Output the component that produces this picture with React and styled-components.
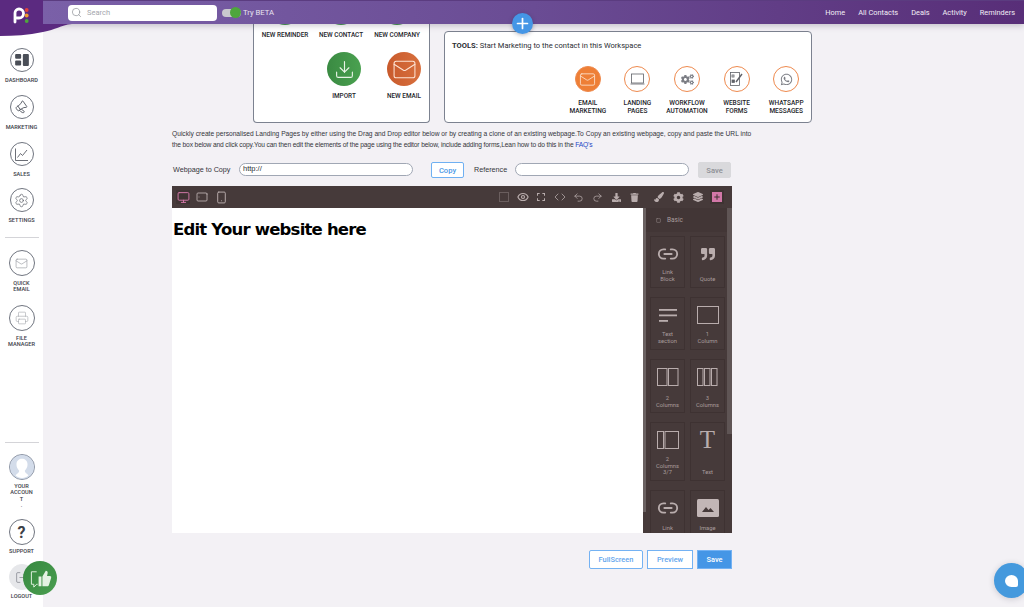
import styled, { createGlobalStyle } from 'styled-components';
import { Mail, Download, Settings, Megaphone, Search, Monitor, Tablet, Smartphone, Eye, Code, Undo2, Redo2, Link2, Plus, Square, Printer, LogOut } from 'lucide-react';
import { FaWhatsapp, FaCog, FaCogs, FaLayerGroup, FaPaintBrush, FaTrash, FaDownload, FaQuoteRight } from 'react-icons/fa';

const GlobalStyle = createGlobalStyle`
  html, body {
    margin: 0;
    height: 100%;
    overflow: hidden;
    background: #f3f1f5;
    font-family: Roboto, "Liberation Sans", sans-serif;
  }
  * { box-sizing: border-box; }
`;

const Page = styled.div`
  position: relative;
  display: flex;
  width: 1024px;
  height: 607px;
  overflow: hidden;
`;

// Left rail
const Sidebar = styled.aside`
  width: 43px;
  flex: none;
  height: 607px;
  background: #fff;
  display: flex;
  flex-direction: column;
  align-items: center;
  padding-top: 48px;
`;

const Brand = styled.svg`
  position: absolute;
  left: 0;
  top: 0;
  z-index: 5;
`;

const NavItem = styled.div`
  display: flex;
  flex-direction: column;
  align-items: center;
  width: 43px;
  flex: none;
  height: ${(p) => p.$height}px;
`;

const NavCircle = styled.div`
  width: ${(p) => p.$size || 24}px;
  height: ${(p) => p.$size || 24}px;
  border-radius: 50%;
  border: 1px solid ${(p) => p.$line || '#70757f'};
  display: flex;
  align-items: center;
  justify-content: center;
  color: ${(p) => p.$color || '#5b5f68'};
  background: ${(p) => p.$bg || '#fff'};
  flex: none;
  overflow: hidden;
`;

const HelpMark = styled.span`
  font-size: 16px;
  font-weight: 700;
  color: #3c4048;
`;

const NavLabel = styled.div`
  margin-top: ${(p) => p.$gap || 5}px;
  font-size: 5.6px;
  line-height: 6.4px;
  font-weight: 500;
  color: #3c4048;
  text-align: center;
  white-space: nowrap;
`;

const Divider = styled.div`
  width: 34px;
  height: 1px;
  background: #d4d4d8;
  flex: none;
  margin-bottom: ${(p) => p.$below}px;
`;

const Spacer = styled.div`
  flex: 1;
`;

const Main = styled.div`
  flex: 1;
  display: flex;
  flex-direction: column;
  min-width: 0;
`;

// Top bar
const TopBar = styled.header`
  height: 24px;
  flex: none;
  display: flex;
  align-items: center;
  padding-left: 25px;
  background: linear-gradient(90deg, #7a60a8 0%, #6a4c94 50%, #582e78 100%);
  border-top: 1px solid #5b3c80;
  box-shadow: 0 2px 6px rgba(60, 50, 80, 0.25);
  position: relative;
  z-index: 3;
`;

const SearchBox = styled.div`
  width: 149px;
  height: 16px;
  border-radius: 4px;
  background: #fff;
  display: flex;
  align-items: center;
  gap: 5px;
  padding-left: 3px;
  color: #a4a6ad;
  font-size: 7.5px;
`;

const Toggle = styled.div`
  position: relative;
  width: 19px;
  height: 8px;
  border-radius: 4px;
  background: #c9c9ce;
  margin-left: 5px;
`;

const ToggleKnob = styled.div`
  position: absolute;
  right: 0;
  top: -1.5px;
  width: 11px;
  height: 11px;
  border-radius: 50%;
  background: #4ea63c;
`;

const BetaText = styled.span`
  margin-left: 2px;
  color: #e8e3f0;
  font-size: 7.7px;
`;

const TopNav = styled.nav`
  margin-left: auto;
  margin-right: 9px;
  display: flex;
  gap: 13px;
`;

const TopLink = styled.span`
  color: #f2eef6;
  font-size: 7.4px;
`;

const PlusButton = styled.div`
  position: absolute;
  left: 512px;
  top: 13px;
  width: 21px;
  height: 21px;
  border-radius: 50%;
  background: #4596e6;
  color: #fff;
  display: flex;
  align-items: center;
  justify-content: center;
  box-shadow: 0 1px 4px rgba(40, 40, 60, 0.35);
  z-index: 4;
`;

// Quick action cards
const CardsRow = styled.section`
  height: 99px;
  flex: none;
  display: flex;
  gap: 14px;
  padding-left: 210px;
`;

const ActionsCard = styled.div`
  width: 177px;
  height: 99px;
  background: #fff;
  border: 1.5px solid #7c8290;
  border-top: none;
  border-radius: 0 0 4px 4px;
  overflow: hidden;
`;

const ActionRow = styled.div`
  display: flex;
  justify-content: flex-end;
  gap: ${(p) => p.$gap}px;
  padding-right: ${(p) => p.$right}px;
  margin-top: ${(p) => p.$top}px;
`;

const ActionItem = styled.div`
  width: ${(p) => p.$width}px;
  display: flex;
  flex-direction: column;
  align-items: center;
`;

const ActionCircle = styled.div`
  width: 34px;
  height: 34px;
  border-radius: 50%;
  flex: none;
  display: flex;
  align-items: center;
  justify-content: center;
  color: #e9f3e6;
  background: ${(p) => p.$bg};
`;

const ActionLabel = styled.div`
  margin-top: ${(p) => p.$gap}px;
  font-size: 6.4px;
  font-weight: 500;
  line-height: 8px;
  white-space: nowrap;
  color: #23252a;
`;

const ToolsCard = styled.div`
  width: 368px;
  height: 92px;
  margin-top: 7px;
  background: #fff;
  border: 1.5px solid #7c8290;
  border-radius: 4px;
  padding: 9px 0 0 7px;
  display: flex;
  flex-direction: column;
`;

const ToolsTitle = styled.div`
  font-size: 7.55px;
  line-height: 10px;
  color: #2b2d33;
  b { font-weight: 700; }
`;

const ToolsRow = styled.div`
  margin-top: 15px;
  display: flex;
  justify-content: flex-end;
`;

const ToolItem = styled.div`
  width: 49.6px;
  display: flex;
  flex-direction: column;
  align-items: center;
`;

const ToolCircle = styled.div`
  width: 26px;
  height: 26px;
  border-radius: 50%;
  border: 1px solid #ee8a4e;
  background: ${(p) => (p.$filled ? '#ee7f36' : '#fff')};
  color: ${(p) => (p.$filled ? '#fde3cf' : '#7b7d84')};
  display: flex;
  align-items: center;
  justify-content: center;
`;

const ToolLabel = styled.div`
  margin-top: 6.8px;
  font-size: 6.5px;
  font-weight: 500;
  line-height: 8.2px;
  text-align: center;
  white-space: nowrap;
  color: #23252a;
`;

// Landing page builder
const Builder = styled.section`
  padding-left: 129px;
  width: 689px;
`;

const Intro = styled.p`
  margin: 5px 0 0;
  font-family: "Liberation Sans", sans-serif;
  font-size: 6.67px;
  line-height: 11px;
  color: #33353b;
  white-space: nowrap;
  a { color: #2347c5; text-decoration: none; }
`;

const IntroLine = styled.span`
  display: block;
  letter-spacing: ${(p) => p.$spacing || 0}px;
`;

const CopyRow = styled.div`
  margin-top: 12px;
  height: 16px;
  display: flex;
  align-items: center;
  font-family: "Liberation Sans", sans-serif;
  font-size: 7.2px;
  color: #33353b;
`;

const RowLabel = styled.span`
  width: ${(p) => p.$width}px;
  margin-left: ${(p) => p.$left || 0}px;
  margin-bottom: 2px;
  flex: none;
  padding-left: 1px;
  white-space: nowrap;
`;

const UrlInput = styled.div`
  width: 174px;
  height: 13px;
  margin-bottom: 2px;
  border: 1px solid #a0a7b4;
  border-radius: 7px;
  background: #fff;
  font-size: 7.5px;
  line-height: 10px;
  padding-left: 3px;
  color: #2b2d33;
  flex: none;
`;

const SmallButton = styled.div`
  height: 16px;
  width: ${(p) => p.$width}px;
  flex: none;
  margin-left: ${(p) => p.$left}px;
  border-radius: 2px;
  border: 1px solid ${(p) => (p.$muted ? '#d9d9dc' : '#6fb0f2')};
  background: ${(p) => (p.$muted ? '#d9d9dc' : '#fff')};
  color: ${(p) => (p.$muted ? '#8d8f94' : '#4b97e6')};
  font-family: Roboto, sans-serif;
  font-size: 7.6px;
  font-weight: 500;
  display: flex;
  align-items: center;
  justify-content: center;
`;

const Editor = styled.div`
  margin-top: 8px;
  width: 560px;
  height: 347px;
  display: flex;
  flex-direction: column;
  background: #fff;
`;

const EditorBar = styled.div`
  height: 22px;
  flex: none;
  background: #463a3a;
  display: flex;
  align-items: center;
  color: #b9adad;
`;

const BarGroup = styled.div`
  display: flex;
  align-items: center;
  flex: none;
  gap: ${(p) => p.$gap}px;
  margin-left: ${(p) => p.$left || 0}px;
`;

const BarIcon = styled.span`
  width: 14px;
  height: 14px;
  display: flex;
  align-items: center;
  justify-content: center;
  flex: none;
  background: ${(p) => (p.$active ? '#3f3333' : 'transparent')};
  color: ${(p) => (p.$active ? '#d278a8' : 'inherit')};
`;

const SideTablet = styled(Tablet)`
  transform: rotate(90deg);
`;

const PinkSquare = styled.span`
  width: 10px;
  height: 10px;
  background: #d278a8;
  color: #3f3333;
  display: flex;
  align-items: center;
  justify-content: center;
`;

const EditorBody = styled.div`
  flex: 1;
  display: flex;
  min-height: 0;
`;

const Canvas = styled.div`
  flex: 1;
  background: #fff;
  padding: 11px 0 0 1px;
`;

const Heading = styled.h1`
  margin: 0;
  font-family: "DejaVu Sans", sans-serif;
  font-size: 16.5px;
  letter-spacing: -0.8px;
  line-height: 22px;
  font-weight: 700;
  color: #000;
`;

const Panel = styled.aside`
  position: relative;
  width: 89px;
  flex: none;
  background: #463a3a;
  overflow: hidden;
  &::before {
    content: '';
    position: absolute;
    left: 0;
    top: 0;
    width: 3px;
    height: 304px;
    background: #6b6262;
  }
  &::after {
    content: '';
    position: absolute;
    right: 0;
    top: 0;
    width: 5px;
    height: 226px;
    background: #5f5555;
  }
`;

const PanelHead = styled.div`
  height: 24px;
  display: flex;
  align-items: center;
  gap: 6px;
  padding-left: 13px;
  color: #a99d9d;
  font-size: 6.5px;
  background: #423636;
`;

const BlockGrid = styled.div`
  margin-top: 4px;
  margin-left: 7px;
  display: grid;
  grid-template-columns: 35px 35px;
  column-gap: 5px;
  row-gap: 9px;
`;

const Block = styled.div`
  height: ${(p) => p.$height}px;
  border: 1px solid #3e3232;
  display: flex;
  flex-direction: column;
  align-items: center;
  color: #b9adad;
  padding-top: 5px;
`;

const BlockIcon = styled.div`
  height: 24px;
  flex: none;
  display: flex;
  align-items: center;
  justify-content: center;
`;

const TextGlyph = styled.span`
  font-family: "Liberation Serif", serif;
  font-size: 25px;
  line-height: 24px;
`;

const BlockLabel = styled.div`
  margin-top: ${(p) => p.$gap}px;
  font-size: 5.8px;
  line-height: 6.6px;
  text-align: center;
  color: #a99d9d;
`;

const BottomActions = styled.div`
  margin-top: 17px;
  width: 560px;
  display: flex;
  justify-content: flex-end;
  gap: 4px;
`;

const OutlineButton = styled.div`
  width: ${(p) => p.$width}px;
  height: 19px;
  border: 1px solid #74b2f3;
  border-radius: ${(p) => p.$radius || 0}px;
  background: ${(p) => (p.$solid ? '#4596e6' : '#fff')};
  color: ${(p) => (p.$solid ? '#fff' : '#5fa5ed')};
  font-size: 7.4px;
  font-weight: 500;
  display: flex;
  align-items: center;
  justify-content: center;
`;

// Floating bubbles
const ThumbBubble = styled.div`
  position: absolute;
  left: 23px;
  top: 561px;
  width: 34px;
  height: 34px;
  border-radius: 50%;
  background: linear-gradient(135deg, #36883f, #4a9e50);
  display: flex;
  align-items: center;
  justify-content: center;
  z-index: 6;
`;

const ChatBubble = styled.div`
  position: absolute;
  left: 994px;
  top: 563px;
  width: 35px;
  height: 35px;
  border-radius: 50%;
  background: #4499dd;
  box-shadow: 0 1px 6px rgba(40, 40, 60, 0.2);
  display: flex;
  align-items: center;
  padding-left: 11px;
`;

const ChatTail = styled.div`
  width: 13px;
  height: 12px;
  background: #fff;
  border-radius: 50% 50% 2px 50%;
`;

const Dash = () => (
  <svg width="14" height="12" viewBox="0 0 16 14" fill="#4a4e57">
    <rect x="0" y="0" width="7" height="5.5" rx="1.2" />
    <rect x="0" y="7.5" width="7" height="6" rx="1.2" />
    <rect x="9" y="0" width="7" height="14" rx="1.2" />
  </svg>
);

const TiltedMegaphone = styled(Megaphone)`
  transform: rotate(-35deg);
`;

const SalesChart = () => (
  <svg width="15" height="15" viewBox="0 0 15 15" fill="none" stroke="#5b5f68" strokeWidth="0.9">
    <path d="M1.5 1.5V13.5H14" />
    <path d="M3.5 10.5L6.5 6.5L8.5 8.5L13 3" />
  </svg>
);

const Account = () => (
  <svg width="24" height="24" viewBox="0 0 26 26">
    <circle cx="13" cy="13" r="13" fill="#d3dcea" />
    <path d="M6 22c2-2 4-3 4-5-2-2-3-4-3-7 0-4 3-6 6-6s6 2 6 6c0 3-1 5-3 7 0 2 2 3 4 5-2 2-4 3-7 3s-5-1-7-3z" fill="#fff" />
  </svg>
);

const ThumbIcon = () => (
  <svg width="23" height="23" viewBox="0 0 24 24">
    <path d="M8 5H2.5v13H5v3l3-3h1" fill="none" stroke="#e4f2e2" strokeWidth="1" />
    <path d="M10 10h3v10h-3zM14 10l3.5-6c1.6 0 2.3 1.2 1.9 2.8L18.8 9.5h3c1.1 0 1.7 1 1.2 2.2l-2.2 7c-.3.8-.9 1.3-1.7 1.3H14z" fill="#e4f2e2" />
  </svg>
);

const TextLines = () => (
  <svg width="18" height="13" viewBox="0 0 18 13" fill="#b9adad">
    <rect y="0" width="18" height="1.8" />
    <rect y="5.5" width="18" height="1.8" />
    <rect y="11" width="9" height="1.8" />
  </svg>
);

const OneColumn = () => (
  <svg width="22" height="18" viewBox="0 0 22 18" fill="none" stroke="#b9adad">
    <rect x="0.5" y="0.5" width="21" height="17" />
  </svg>
);

const Columns = ({ widths }) => {
  let x = 0.5;
  return (
    <svg width="22" height="18" viewBox="0 0 22 18" fill="none" stroke="#b9adad">
      {widths.map((w) => {
        const rect = <rect key={x} x={x} y="0.5" width={w} height="17" />;
        x += w + 1.5;
        return rect;
      })}
    </svg>
  );
};

const ImageBlock = () => (
  <svg width="22" height="18" viewBox="0 0 22 18">
    <rect width="22" height="18" rx="1.5" fill="#c2b6b6" />
    <path d="M5 13l4-5 2.5 3 2-2 3.5 4z" fill="#463a3a" />
  </svg>
);

const DashedSquare = () => (
  <svg width="10" height="10" viewBox="0 0 10 10" fill="none" stroke="#8f8383" strokeDasharray="1 1">
    <rect x="0.5" y="0.5" width="9" height="9" />
  </svg>
);

const Corners = () => (
  <svg width="8" height="8" viewBox="0 0 9 9" fill="none" stroke="#b9adad" strokeWidth="1.2">
    <path d="M0.5 3V0.5H3M6 0.5H8.5V3M8.5 6V8.5H6M3 8.5H0.5V6" />
  </svg>
);

const LandingIcon = () => (
  <svg width="15" height="12" viewBox="0 0 15 12" fill="none" stroke="#5f6168" strokeWidth="0.8">
    <rect x="1.5" y="1" width="12" height="9" />
    <path d="M0.5 11H14.5" />
  </svg>
);

const FormIcon = () => (
  <svg width="13" height="14" viewBox="0 0 13 14" fill="none" stroke="#5f6168" strokeWidth="0.8">
    <rect x="0.5" y="0.5" width="9" height="13" />
    <rect x="2" y="3" width="2" height="2" />
    <rect x="2" y="8" width="2.4" height="2.4" fill="#5f6168" />
    <path d="M6 10L12 2" strokeWidth="1.4" />
  </svg>
);

const blocks = [
  { icon: <Link2 size={22} />, label: ['Link', 'Block'], height: 52, gap: 3 },
  { icon: <FaQuoteRight size={14} />, label: ['Quote'], height: 52, gap: 10 },
  { icon: <TextLines />, label: ['Text', 'section'], height: 53, gap: 4 },
  { icon: <OneColumn />, label: ['1', 'Column'], height: 53, gap: 4 },
  { icon: <Columns widths={[9.5, 9.5]} />, label: ['2', 'Columns'], height: 54, gap: 6 },
  { icon: <Columns widths={[5.5, 5.5, 5.5]} />, label: ['3', 'Columns'], height: 54, gap: 6 },
  { icon: <Columns widths={[6, 13.5]} />, label: ['2', 'Columns', '3/7'], height: 59, gap: 4 },
  { icon: <TextGlyph>T</TextGlyph>, label: ['Text'], height: 59, gap: 17 },
  { icon: <Link2 size={22} />, label: ['Link'], height: 60, gap: 5 },
  { icon: <ImageBlock />, label: ['Image'], height: 60, gap: 5 },
];

const tools = [
  { icon: <Mail size={17} strokeWidth={1.2} />, label: ['EMAIL', 'MARKETING'], filled: true },
  { icon: <LandingIcon />, label: ['LANDING', 'PAGES'] },
  { icon: <FaCogs size={13} />, label: ['WORKFLOW', 'AUTOMATION'] },
  { icon: <FormIcon />, label: ['WEBSITE', 'FORMS'] },
  { icon: <FaWhatsapp size={13} />, label: ['WHATSAPP', 'MESSAGES'] },
];

export default function App() {
  return (
    <Page>
      <GlobalStyle />
      <Brand width="72" height="38" viewBox="0 0 72 38">
        <path d="M0 0H43V24H72C60 25 56 30 43 32 28 35 14 36 0 36Z" fill="#5b2a80" />
        <path d="M15 22V13a4 4 0 0 1 4-4 4 4 0 0 1 0 9h-2" fill="none" stroke="#fff" strokeWidth="2.8" strokeLinecap="round" />
        <circle cx="26.7" cy="10" r="1.9" fill="#e2413c" />
        <circle cx="26.7" cy="15.5" r="1.9" fill="#ef9a2d" />
        <circle cx="26.7" cy="21" r="1.9" fill="#4ea63c" />
      </Brand>

      <Sidebar>
        <NavItem $height={47}>
          <NavCircle><Dash /></NavCircle>
          <NavLabel $gap={5}>DASHBOARD</NavLabel>
        </NavItem>
        <NavItem $height={47}>
          <NavCircle><TiltedMegaphone size={13} strokeWidth={1.6} /></NavCircle>
          <NavLabel $gap={5}>MARKETING</NavLabel>
        </NavItem>
        <NavItem $height={46}>
          <NavCircle><SalesChart /></NavCircle>
          <NavLabel $gap={5}>SALES</NavLabel>
        </NavItem>
        <NavItem $height={49}>
          <NavCircle><Settings size={15} strokeWidth={1.1} /></NavCircle>
          <NavLabel $gap={5}>SETTINGS</NavLabel>
        </NavItem>
        <Divider $below={12} />
        <NavItem $height={55}>
          <NavCircle $size={26} $color="#85888f"><Mail size={13} strokeWidth={1} /></NavCircle>
          <NavLabel $gap={4}>QUICK<br />EMAIL</NavLabel>
        </NavItem>
        <NavItem $height={55}>
          <NavCircle $size={26} $color="#a0a3a9"><Printer size={14} strokeWidth={1} /></NavCircle>
          <NavLabel $gap={4}>FILE<br />MANAGER</NavLabel>
        </NavItem>
        <Spacer />
        <Divider $below={11} />
        <NavItem $height={65}>
          <NavCircle $size={26} $bg="#d3dcea" $line="#8f97a6"><Account /></NavCircle>
          <NavLabel $gap={3}>YOUR<br />ACCOUN<br />T<br />.</NavLabel>
        </NavItem>
        <NavItem $height={45}>
          <NavCircle $size={26}><HelpMark>?</HelpMark></NavCircle>
          <NavLabel $gap={3}>SUPPORT</NavLabel>
        </NavItem>
        <NavItem $height={43}>
          <NavCircle $size={26} $bg="#e6e7ea" $line="#e6e7ea"><LogOut size={13} strokeWidth={1} /></NavCircle>
          <NavLabel $gap={3}>LOGOUT</NavLabel>
        </NavItem>
      </Sidebar>

      <Main>
        <TopBar>
          <SearchBox><Search size={11} strokeWidth={1.5} color="#8d9096" />Search</SearchBox>
          <Toggle><ToggleKnob /></Toggle>
          <BetaText>Try BETA</BetaText>
          <TopNav>
            {['Home', 'All Contacts', 'Deals', 'Activity', 'Reminders'].map((item) => (
              <TopLink key={item}>{item}</TopLink>
            ))}
          </TopNav>
        </TopBar>
        <PlusButton><Plus size={17} strokeWidth={2.4} /></PlusButton>

        <CardsRow>
          <ActionsCard>
            <ActionRow $gap={22} $right={15} $top={-33}>
              {['NEW REMINDER', 'NEW CONTACT', 'NEW COMPANY'].map((label) => (
                <ActionItem key={label} $width={34}>
                  <ActionCircle $bg="#3f9248" />
                  <ActionLabel $gap={6}>{label}</ActionLabel>
                </ActionItem>
              ))}
            </ActionRow>
            <ActionRow $gap={26} $right={8} $top={13}>
              <ActionItem $width={34}>
                <ActionCircle $bg="linear-gradient(90deg, #3a8a42, #4aa150)"><Download size={21} strokeWidth={1.3} /></ActionCircle>
                <ActionLabel $gap={6}>IMPORT</ActionLabel>
              </ActionItem>
              <ActionItem $width={34}>
                <ActionCircle $bg="linear-gradient(90deg, #c85a2c, #d8703e)"><Mail size={25} strokeWidth={1} color="#fde3d4" /></ActionCircle>
                <ActionLabel $gap={6}>NEW EMAIL</ActionLabel>
              </ActionItem>
            </ActionRow>
          </ActionsCard>

          <ToolsCard>
            <ToolsTitle><b>TOOLS:</b> Start Marketing to the contact in this Workspace</ToolsTitle>
            <ToolsRow>
              {tools.map((tool) => (
                <ToolItem key={tool.label[0]}>
                  <ToolCircle $filled={tool.filled}>{tool.icon}</ToolCircle>
                  <ToolLabel>{tool.label[0]}<br />{tool.label[1]}</ToolLabel>
                </ToolItem>
              ))}
            </ToolsRow>
          </ToolsCard>
        </CardsRow>

        <Builder>
          <Intro>
            <IntroLine>Quickly create personalised Landing Pages by either using the Drag and Drop editor below or by creating a clone of an existing webpage.To Copy an existing webpage, copy and paste the URL into</IntroLine>
            <IntroLine $spacing={-0.14}>the box below and click copy.You can then edit the elements of the page using the editor below, include adding forms,Lean how to do this in the <a href="#faq">FAQ&apos;s</a></IntroLine>
          </Intro>

          <CopyRow>
            <RowLabel $width={67}>Webpage to Copy</RowLabel>
            <UrlInput>http://</UrlInput>
            <SmallButton $width={33} $left={18}>Copy</SmallButton>
            <RowLabel $width={42} $left={9}>Reference</RowLabel>
            <UrlInput />
            <SmallButton $width={33} $left={9} $muted>Save</SmallButton>
          </CopyRow>

          <Editor>
            <EditorBar>
              <BarGroup $gap={5} $left={4}>
                <BarIcon $active><Monitor size={13} strokeWidth={1.8} /></BarIcon>
                <BarIcon><SideTablet size={12} strokeWidth={1.8} /></BarIcon>
                <BarIcon><Smartphone size={13} strokeWidth={1.8} /></BarIcon>
              </BarGroup>
              <BarGroup $gap={4.7} $left={269}>
                <BarIcon><DashedSquare /></BarIcon>
                <BarIcon><Eye size={12} strokeWidth={2.4} /></BarIcon>
                <BarIcon><Corners /></BarIcon>
                <BarIcon><Code size={12} strokeWidth={1.5} /></BarIcon>
                <BarIcon><Undo2 size={11} strokeWidth={1.6} /></BarIcon>
                <BarIcon><Redo2 size={11} strokeWidth={1.6} /></BarIcon>
                <BarIcon><FaDownload size={9} /></BarIcon>
                <BarIcon><FaTrash size={9} /></BarIcon>
              </BarGroup>
              <BarGroup $gap={5.4} $left={10}>
                <BarIcon><FaPaintBrush size={10} /></BarIcon>
                <BarIcon><FaCog size={11} /></BarIcon>
                <BarIcon><FaLayerGroup size={10} /></BarIcon>
                <BarIcon $active><PinkSquare><Plus size={8} strokeWidth={3} /></PinkSquare></BarIcon>
              </BarGroup>
            </EditorBar>
            <EditorBody>
              <Canvas>
                <Heading>Edit Your website here</Heading>
              </Canvas>
              <Panel>
                <PanelHead><Square size={5} strokeWidth={2} />Basic</PanelHead>
                <BlockGrid>
                  {blocks.map((block, i) => (
                    <Block key={i} $height={block.height}>
                      <BlockIcon>{block.icon}</BlockIcon>
                      <BlockLabel $gap={block.gap}>
                        {block.label.map((line) => <div key={line}>{line}</div>)}
                      </BlockLabel>
                    </Block>
                  ))}
                </BlockGrid>
              </Panel>
            </EditorBody>
          </Editor>

          <BottomActions>
            <OutlineButton $width={54} $radius={2}>FullScreen</OutlineButton>
            <OutlineButton $width={46}>Preview</OutlineButton>
            <OutlineButton $width={35} $solid>Save</OutlineButton>
          </BottomActions>
        </Builder>
      </Main>

      <ThumbBubble><ThumbIcon /></ThumbBubble>
      <ChatBubble><ChatTail /></ChatBubble>
    </Page>
  );
}
